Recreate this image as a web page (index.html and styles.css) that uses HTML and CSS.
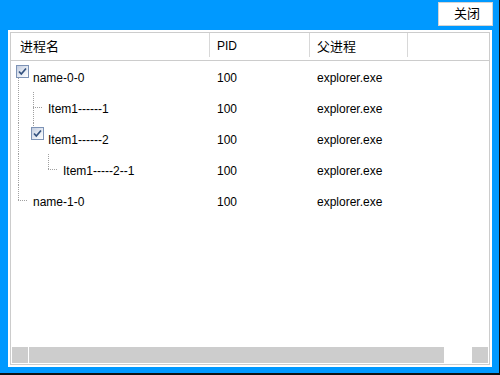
FILE: index.html
```html
<!DOCTYPE html>
<html>
	<head>
		<meta charset="UTF-8">
		<title>进程列表</title>
		<link rel="stylesheet" href="styles.css">
	</head>
	<body>
		<div class="toolbar">
			<a href="javascript:;" class="close">关闭</a>
		</div>
		<div class="panel">
			<div class="grid">
				<div class="head">
					<div class="th first cn">进程名</div>
					<div class="th">PID</div>
					<div class="th cn">父进程</div>
					<div class="th last"></div>
				</div>
				<div class="rows">
					<div class="row">
						<div class="tree">
							<span class="seg start"><span class="chk"><svg width="11" height="11" viewBox="0 0 11 11"><path d="M2 5.5 L4.3 8 L9 2.5" fill="none" stroke="#34527f" stroke-width="1.7"/></svg></span></span>
							<span class="label">name-0-0</span>
						</div>
						<div class="td">100</div>
						<div class="td">explorer.exe</div>
						<div class="td"></div>
					</div>
					<div class="row">
						<div class="tree">
							<span class="seg pass"></span><span class="seg tee"></span>
							<span class="label">Item1------1</span>
						</div>
						<div class="td">100</div>
						<div class="td">explorer.exe</div>
						<div class="td"></div>
					</div>
					<div class="row">
						<div class="tree">
							<span class="seg pass"></span><span class="seg end"><span class="chk"><svg width="11" height="11" viewBox="0 0 11 11"><path d="M2 5.5 L4.3 8 L9 2.5" fill="none" stroke="#34527f" stroke-width="1.7"/></svg></span></span>
							<span class="label">Item1------2</span>
						</div>
						<div class="td">100</div>
						<div class="td">explorer.exe</div>
						<div class="td"></div>
					</div>
					<div class="row">
						<div class="tree">
							<span class="seg pass"></span><span class="seg"></span><span class="seg end"></span>
							<span class="label">Item1-----2--1</span>
						</div>
						<div class="td">100</div>
						<div class="td">explorer.exe</div>
						<div class="td"></div>
					</div>
					<div class="row">
						<div class="tree">
							<span class="seg end"></span>
							<span class="label">name-1-0</span>
						</div>
						<div class="td">100</div>
						<div class="td">explorer.exe</div>
						<div class="td"></div>
					</div>
				</div>
				<div class="hscroll">
					<span class="btn"></span>
					<span class="thumb"></span>
					<span class="track"></span>
					<span class="btn"></span>
				</div>
			</div>
		</div>
	</body>
</html>
```

FILE: styles.css
```css
html,body{
	margin: 0;
	padding: 0;
}
body{
	width: 500px;
	height: 375px;
	box-sizing: border-box;
	background: #0099ff;
	border-right: 1px solid #111;
	border-bottom: 2px solid #111;
	font-family: "Liberation Sans", "Noto Sans CJK SC", sans-serif;
	font-size: 12px;
	color: #000;
}
a{
	text-decoration: none;
	color: #000;
}
.cn{
	font-size: 13px;
}
.toolbar{
	display: flex;
	justify-content: flex-end;
	padding: 2px 6px 0 0;
}
.close{
	display: block;
	width: 55px;
	height: 24px;
	box-sizing: border-box;
	border: 1px solid #d4d4d4;
	background: #fff;
	font-size: 13px;
	line-height: 22px;
	text-align: center;
	padding-left: 3px;
}
.panel{
	width: 484px;
	margin: 4px 0 0 8px;
	padding: 2px;
	box-sizing: border-box;
	background: #fff;
}
.grid{
	height: 333px;
	box-sizing: border-box;
	border: 1px solid #cccccc;
	display: flex;
	flex-direction: column;
}
.head,.row{
	display: grid;
	grid-template-columns: 198px 100px 98px 1fr;
}
.head{
	height: 28px;
	box-sizing: border-box;
	padding: 0 1px;
	border-bottom: 1px solid #cccccc;
}
.th{
	height: 24px;
	box-sizing: border-box;
	padding: 3px 0 0 7px;
	line-height: 21px;
	border-right: 1px solid #d8d8d8;
}
.th.first{
	padding-left: 8px;
}
.th.last{
	border-right: none;
}
.rows{
	flex: 1;
	padding: 0 1px;
}
.row{
	height: 31px;
	line-height: 31px;
}
.td{
	padding: 2px 0 0 7px;
	white-space: nowrap;
}
.tree{
	display: flex;
	align-items: flex-start;
}
.label{
	margin-left: 6px;
	padding-top: 2px;
	white-space: nowrap;
}
/* 树的虚线 */
.seg{
	flex: none;
	width: 15px;
	height: 31px;
	display: flex;
	align-items: flex-start;
	background-repeat: no-repeat;
}
.seg.pass{
	background-image: repeating-linear-gradient(to bottom, #a0a0a0 0 1px, transparent 1px 2px);
	background-size: 1px 100%;
	background-position: 6px 0;
}
.seg.tee{
	background-image: repeating-linear-gradient(to bottom, #a0a0a0 0 1px, transparent 1px 2px),
		repeating-linear-gradient(to right, #a0a0a0 0 1px, transparent 1px 2px);
	background-size: 1px 100%, 9px 1px;
	background-position: 6px 0, 6px 15px;
}
.seg.end{
	background-image: repeating-linear-gradient(to bottom, #a0a0a0 0 1px, transparent 1px 2px),
		repeating-linear-gradient(to right, #a0a0a0 0 1px, transparent 1px 2px);
	background-size: 1px 16px, 9px 1px;
	background-position: 6px 0, 6px 15px;
}
.seg.start{
	background-image: repeating-linear-gradient(to bottom, #a0a0a0 0 1px, transparent 1px 2px),
		repeating-linear-gradient(to right, #a0a0a0 0 1px, transparent 1px 2px);
	background-size: 1px 16px, 9px 1px;
	background-position: 6px 15px, 6px 15px;
}
.chk{
	flex: none;
	width: 11px;
	height: 11px;
	margin: 4px -2px 0 4px;
	border: 1px solid #7d93b6;
	background: linear-gradient(135deg, #c3cde0, #eef2f8 70%, #fff);
	display: flex;
}
.chk svg{
	display: block;
}
.hscroll{
	height: 16px;
	margin: 0 1px 1px;
	display: flex;
}
.hscroll .btn{
	width: 16px;
	background: #cdcdcd;
}
.hscroll .thumb{
	width: 415px;
	margin-left: 1px;
	background: #cdcdcd;
}
.hscroll .track{
	flex: 1;
	background: #fff;
}
```
